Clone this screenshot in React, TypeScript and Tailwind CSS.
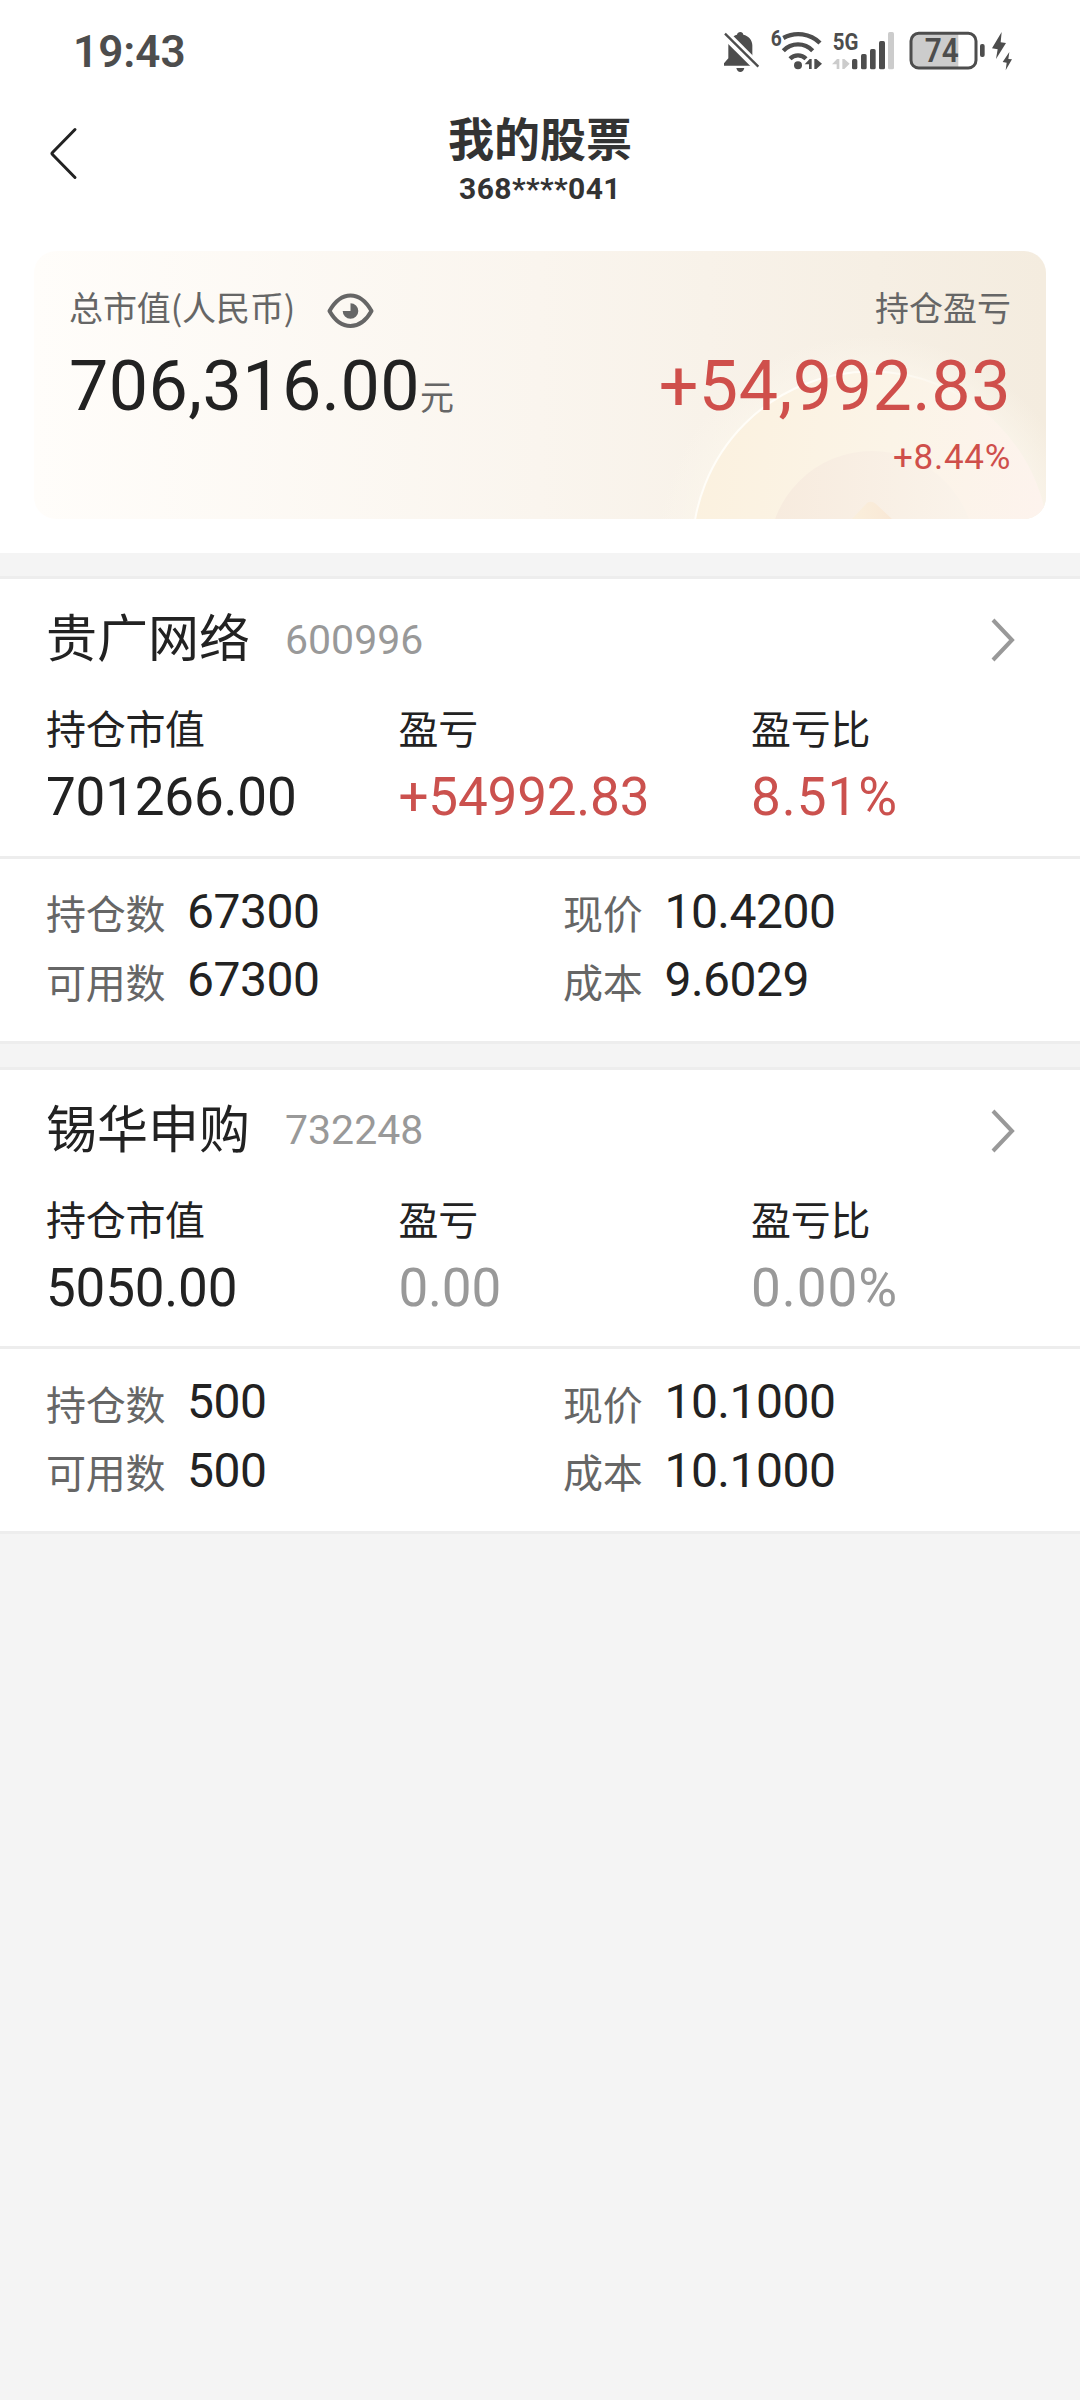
import React from "react";

interface Holding {
  name: string;
  code: string;
  marketValue: string;
  profit: string;
  profitRate: string;
  quantity: string;
  available: string;
  price: string;
  cost: string;
}

const holdings: Holding[] = [
  {
    name: "贵广网络",
    code: "600996",
    marketValue: "701266.00",
    profit: "+54992.83",
    profitRate: "8.51%",
    quantity: "67300",
    available: "67300",
    price: "10.4200",
    cost: "9.6029",
  },
  {
    name: "锡华申购",
    code: "732248",
    marketValue: "5050.00",
    profit: "0.00",
    profitRate: "0.00%",
    quantity: "500",
    available: "500",
    price: "10.1000",
    cost: "10.1000",
  },
];

function BellOffIcon() {
  return (
    <svg width="37" height="43" viewBox="69 60 111 129">
      <path
        d="M72 167V160L85 145V106C85 90 97 78 111 74C112 69 116 66 121 66S129 69 130 74C146 78 157 90 157 106V145L170 160V167Z"
        fill="#4d4d4d"
      />
      <path d="M50 47.500L190 187.500" stroke="#fff" strokeWidth="27.500" />
      <path d="M75 71L175 170" stroke="#4d4d4d" strokeWidth="7" />
      <path d="M109 174H133C131 182 127 186 121 186S111 182 109 174Z" fill="#4d4d4d" />
    </svg>
  );
}

function WifiIcon() {
  return (
    <svg width="53" height="43" viewBox="210 60 159 129" className="ml-[10px] overflow-visible">
      <g fill="none" stroke="#4d4d4d" strokeWidth="13">
        <path d="M250 84A93 93 0 0 1 360 99" />
        <path d="M250 122A61 61 0 0 1 338 122" />
        <path d="M270 146A34 34 0 0 1 318 146" />
      </g>
      <circle cx="294" cy="166" r="12" fill="#4d4d4d" />
      <path d="M314 163L329 147H335V177H327V163ZM343 147H349L366 161L349 177H343Z" fill="#4d4d4d" />
      <text
        x="212"
        y="109"
        fontSize="66"
        fontWeight="700"
        fill="#4d4d4d"
        textLength="33"
        lengthAdjust="spacingAndGlyphs"
      >
        6
      </text>
    </svg>
  );
}

function SignalIcon() {
  return (
    <svg width="64" height="43" viewBox="396 60 192 129" className="ml-[9px] overflow-visible">
      <g fill="#4d4d4d">
        <rect x="456" y="147" width="16" height="31" rx="5" />
        <rect x="483" y="132" width="17" height="46" rx="5" />
        <rect x="510" y="117" width="17" height="61" rx="5" />
        <rect x="537" y="93" width="18" height="85" rx="5" />
      </g>
      <rect x="564" y="66" width="18" height="112" rx="5" fill="#ccc" />
      <path d="M396 163L411 147H418V177H410V163ZM427 147H433L449 161L433 177H427Z" fill="#ccc" />
      <text
        x="398"
        y="120"
        fontSize="73"
        fontWeight="700"
        fill="#4d4d4d"
        textLength="77"
        lengthAdjust="spacingAndGlyphs"
      >
        5G
      </text>
    </svg>
  );
}

function BatteryIcon() {
  return (
    <svg width="77" height="43" viewBox="627 60 231 129" className="ml-[13px]">
      <path d="M655 70H775V173H655Q636 173 636 152V91Q636 70 655 70Z" fill="#ccc" />
      <rect x="633" y="70" width="195" height="104" rx="23" fill="none" stroke="#4d4d4d" strokeWidth="9" />
      <rect x="840" y="102" width="14" height="39" rx="6" fill="#4d4d4d" />
      <text
        x="674"
        y="157"
        fontSize="98"
        fontWeight="600"
        fill="#4d4d4d"
        textLength="102"
        lengthAdjust="spacingAndGlyphs"
      >
        74
      </text>
    </svg>
  );
}

function ChargingIcon() {
  return (
    <svg width="22" height="43" viewBox="873 60 66 129" className="ml-[5px]" fill="#4d4d4d">
      <path d="M905 66L876 115L893 118L888 147L918 99L902 97Z" />
      <path d="M928 126L908 156L920 158L917 181L936 148L925 147Z" />
    </svg>
  );
}

function EyeIcon() {
  return (
    <svg width="47" height="36" viewBox="0 0 47 36" className="ml-[32px] mt-[6px]">
      <path
        d="M2.500 18C7 10 14 2.500 23.500 2.500S40 10 44.500 18C40 26 33 33 23.500 33S7 26 2.500 18Z"
        fill="none"
        stroke="#666"
        strokeWidth="4"
        strokeLinejoin="round"
      />
      <path d="M23.500 18V10.200A7.800 7.800 0 1 1 15.700 18Z" fill="#666" />
    </svg>
  );
}

function ChevronRight() {
  return (
    <svg width="26" height="46" viewBox="0 0 26 46" className="ml-auto" fill="none">
      <path d="M3 3L22 23L3 43" stroke="#999" strokeWidth="4" />
    </svg>
  );
}

// pale rings behind the profit figures
function CardRings() {
  return (
    <svg width="1012" height="268" viewBox="0 0 1012 268" className="absolute inset-0" fill="none">
      <defs>
        <linearGradient id="outer" x1="659" y1="200" x2="1012" y2="240" gradientUnits="userSpaceOnUse">
          <stop offset="0" stopColor="#fbf1df" />
          <stop offset="0.550" stopColor="#fbf4e7" />
          <stop offset="1" stopColor="#fdf3ed" />
        </linearGradient>
        <linearGradient id="inner" x1="740" y1="250" x2="934" y2="250" gradientUnits="userSpaceOnUse">
          <stop offset="0" stopColor="#f7ebde" />
          <stop offset="1" stopColor="#faf3ea" />
        </linearGradient>
        <linearGradient id="rim" x1="659" y1="250" x2="960" y2="160" gradientUnits="userSpaceOnUse">
          <stop offset="0" stopColor="#fffdf8" />
          <stop offset="0.600" stopColor="#fffdf8" />
          <stop offset="1" stopColor="#fffdf8" stopOpacity="0" />
        </linearGradient>
        <linearGradient id="peak" x1="822" y1="260" x2="858" y2="260" gradientUnits="userSpaceOnUse">
          <stop offset="0" stopColor="#faeedb" />
          <stop offset="1" stopColor="#f9e8d6" />
        </linearGradient>
        <radialGradient id="glow" cx="837" cy="299" r="215" gradientUnits="userSpaceOnUse">
          <stop offset="0.820" stopColor="#fbf6ec" stopOpacity="0.700" />
          <stop offset="1" stopColor="#fbf6ec" stopOpacity="0" />
        </radialGradient>
      </defs>
      <circle cx="837" cy="299" r="215" fill="url(#glow)" />
      <circle cx="837" cy="299" r="178.500" fill="url(#outer)" stroke="url(#rim)" strokeWidth="2" />
      <circle cx="838" cy="303" r="103" fill="url(#inner)" />
      <path d="M818 268L833 252Q837 249 842 253L858 268Z" fill="url(#peak)" />
    </svg>
  );
}

function profitColor(value: string): string {
  return parseFloat(value) > 0 ? "text-[#cb514e]" : "text-[#999]";
}

function Metric({ label, value, color }: { label: string; value: string; color: string }) {
  const tracking = value.endsWith("%") ? "tracking-[1px]" : "tracking-[-0.200px]";
  return (
    <div className="w-[352.500px] shrink-0">
      <div className="pt-px text-[40px] leading-[49px] tracking-[-0.300px]">{label}</div>
      <div className={`mt-[15px] font-[Roboto] text-[53px] leading-[60px] ${tracking} ${color}`}>
        {value}
      </div>
    </div>
  );
}

function Detail({ label, value }: { label: string; value: string }) {
  return (
    <div className="flex h-[68.500px] items-center">
      <span className="pt-px text-[40px] leading-[50px] tracking-[-0.300px] text-[#666]">{label}</span>
      <span className="ml-[22px] font-[Roboto] text-[48px] leading-[50px] tracking-[-0.500px]">{value}</span>
    </div>
  );
}

function HoldingCard({ item }: { item: Holding }) {
  return (
    <section className="border-y-[3px] border-[#ededed] bg-white">
      <div className="h-[276.500px] pl-[46px] pr-[64px] pt-[26px]">
        <div className="flex h-[70px] items-center">
          <h2 className="pb-[10px] text-[51px] leading-[60px]">{item.name}</h2>
          <span className="ml-[35px] pb-px font-[Roboto] text-[41px] leading-[50px] text-[#999]">{item.code}</span>
          <ChevronRight />
        </div>
        <div className="mt-[27px] flex">
          <Metric label="持仓市值" value={item.marketValue} color="text-[#222]" />
          <Metric label="盈亏" value={item.profit} color={profitColor(item.profit)} />
          <Metric label="盈亏比" value={item.profitRate} color={profitColor(item.profitRate)} />
        </div>
      </div>
      <div className="grid h-[185px] grid-cols-[517px_1fr] content-start border-t-[3px] border-[#ededed] pl-[46px] pt-[19px]">
        <Detail label="持仓数" value={item.quantity} />
        <Detail label="现价" value={item.price} />
        <Detail label="可用数" value={item.available} />
        <Detail label="成本" value={item.cost} />
      </div>
    </section>
  );
}

export default function App() {
  return (
    <div className="h-[2400px] w-[1080px] overflow-hidden bg-[#f4f4f4] font-['Noto_Sans_CJK_SC',sans-serif] text-[#222]">
      <div className="h-[553px] bg-white">
        <div className="flex h-[103px] items-center justify-between pl-[73px] pr-[67px] font-[Roboto]">
          <span className="text-[44px] font-semibold text-[#4d4d4d]">19:43</span>
          <div className="flex">
            <BellOffIcon />
            <WifiIcon />
            <SignalIcon />
            <BatteryIcon />
            <ChargingIcon />
          </div>
        </div>

        <header className="grid h-[148px] grid-cols-[200px_1fr_200px] text-[#333]">
          <button type="button" className="self-start pl-[49px] pt-[24px]">
            <svg width="30" height="54" viewBox="0 0 30 54" fill="none">
              <path
                d="M26 2.500L3.500 25.500Q2.500 26.500 3.500 27.500L26 50.500"
                stroke="#222"
                strokeWidth="3"
                strokeLinecap="round"
              />
            </svg>
          </button>
          <div className="pt-[8px] text-center">
            <h1 className="text-[46px] font-bold leading-[50px]">我的股票</h1>
            <p className="mt-[12px] font-[Roboto] text-[30px] font-bold leading-[32px] tracking-[0.400px]">
              368****041
            </p>
          </div>
        </header>

        <div className="relative mx-[34px] flex h-[268px] justify-between overflow-hidden rounded-[22px] bg-linear-to-r from-[#fffdfa] via-[#faf5ee] to-[#f4ecdf] px-[35px] pt-[36px]">
          <CardRings />
          <div className="relative">
            <div className="flex h-[40px] text-[34px] leading-[40px] tracking-[-0.100px] text-[#666]">
              总市值(人民币)
              <EyeIcon />
            </div>
            <div className="mt-[29px] whitespace-nowrap font-[Roboto] text-[70px] leading-[60px] tracking-[0.400px]">
              706,316.00
              <span className="font-['Noto_Sans_CJK_SC',sans-serif] text-[34px] leading-[40px] text-[#666]">
                元
              </span>
            </div>
          </div>
          <div className="relative text-right font-[Roboto] text-[#cf4f4b]">
            <div className="font-['Noto_Sans_CJK_SC',sans-serif] text-[34px] leading-[40px] text-[#666]">
              持仓盈亏
            </div>
            <div className="mt-[29px] text-[70px] leading-[60px] tracking-[0.500px]">+54,992.83</div>
            <div className="mt-[22px] text-[35px] leading-[40px] tracking-[0.700px]">+8.44%</div>
          </div>
        </div>
      </div>

      <main className="flex flex-col gap-[23px] pt-[23px]">
        {holdings.map((item) => (
          <HoldingCard key={item.code} item={item} />
        ))}
      </main>
    </div>
  );
}
